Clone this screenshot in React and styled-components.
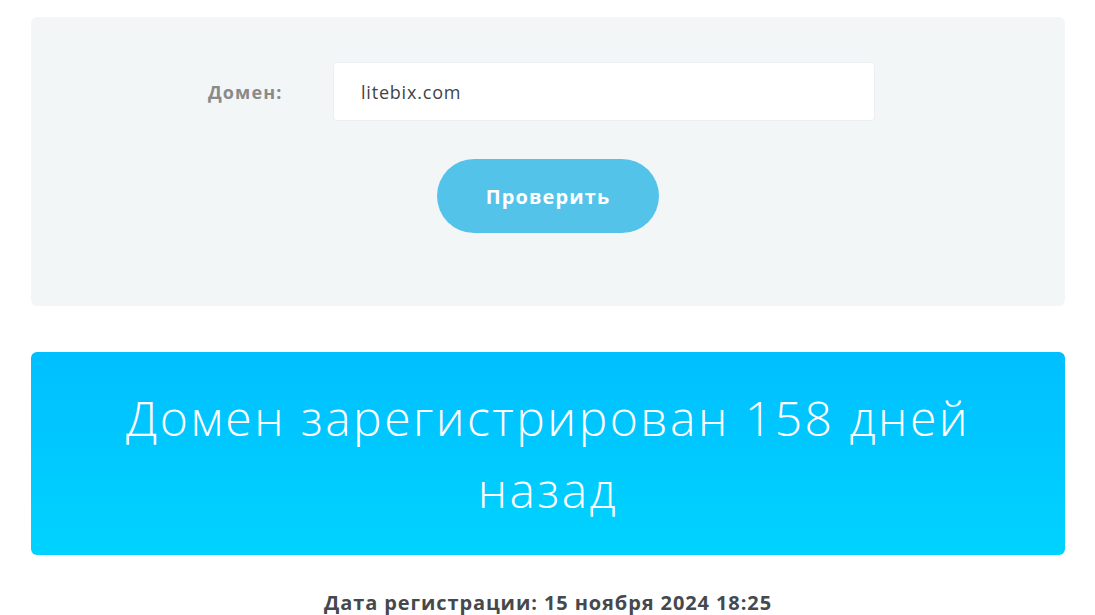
import React from "react";
import styled, { createGlobalStyle } from "styled-components";

const Global = createGlobalStyle`
  html, body { margin: 0; padding: 0; background: #ffffff; }
  body { font-family: "Open Sans", "Noto Sans", sans-serif; }
  * { box-sizing: border-box; }
`;

const Page = styled.div`
  padding: 17px 30px 0 31px;
  display: flex;
  flex-direction: column;
`;

const Panel = styled.form`
  background: #f3f6f7;
  border-radius: 6px;
  padding: 45px 0 73px;
  display: flex;
  flex-direction: column;
  align-items: center;
  gap: 38px;
`;

const Row = styled.div`
  align-self: stretch;
  display: flex;
  align-items: center;
  padding-left: 177px;
`;

const Label = styled.label`
  width: 125px;
  font-family: "Open Sans", sans-serif;
  font-weight: 700;
  font-size: 18px;
  letter-spacing: 1.1px;
  color: #8a8a8a;
`;

const Input = styled.input`
  width: 542px;
  height: 59px;
  border: 1px solid #eceff1;
  border-radius: 4px;
  background: #fff;
  padding: 0 27px;
  font-family: "Open Sans", sans-serif;
  font-size: 18px;
  letter-spacing: 0.8px;
  color: #3f4448;
  outline: none;
`;

const Button = styled.button`
  width: 222px;
  height: 74px;
  border: none;
  border-radius: 37px;
  background: #54c3ea;
  color: #fff;
  font-family: "Open Sans", sans-serif;
  font-weight: 700;
  font-size: 20px;
  letter-spacing: 1.1px;
  cursor: pointer;
`;

const Banner = styled.div`
  margin-top: 46px;
  height: 203px;
  border-radius: 6px;
  background: linear-gradient(180deg, #00bfff 0%, #00d3ff 100%);
  display: flex;
  align-items: center;
  justify-content: center;
  padding: 0 60px;
`;

const BannerText = styled.h1`
  margin: 0;
  text-align: center;
  color: #fff;
  font-family: "Open Sans", sans-serif;
  font-weight: 300;
  font-size: 48px;
  letter-spacing: 2.5px;
  line-height: 72px;
`;

const Info = styled.p`
  margin: 36px 0 0;
  text-align: center;
  font-family: "Open Sans", sans-serif;
  font-weight: 700;
  font-size: 20px;
  letter-spacing: 0.9px;
  line-height: 24px;
  color: #45494d;
`;

export default function App() {
  return (
    <>
      <Global />
      <Page>
        <Panel onSubmit={(e) => e.preventDefault()}>
          <Row>
            <Label htmlFor="domain">Домен:</Label>
            <Input id="domain" defaultValue="litebix.com" />
          </Row>
          <Button type="submit">Проверить</Button>
        </Panel>
        <Banner>
          <BannerText>Домен зарегистрирован 158 дней назад</BannerText>
        </Banner>
        <Info>Дата регистрации: 15 ноября 2024 18:25</Info>
      </Page>
    </>
  );
}
